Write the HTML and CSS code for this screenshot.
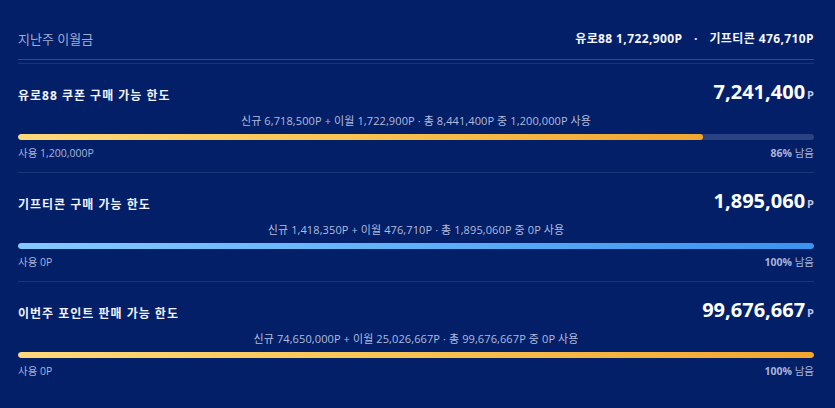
FILE: index.html
```html
<!DOCTYPE html>
<html lang="ko">
<head>
<meta charset="utf-8">
<link rel="stylesheet" href="styles.css">
</head>
<body>
<div class="panel">
  <div class="header">
    <span class="header-label">지난주 이월금</span>
    <span class="header-value">유로88 1,722,900P <span class="dot">·</span> 기프티콘 476,710P</span>
  </div>

  <div class="section">
    <div class="row">
      <span class="title">유로88 쿠폰 구매 가능 한도</span>
      <span class="amount">7,241,400<span class="unit">P</span></span>
    </div>
    <div class="detail">신규 6,718,500P + 이월 1,722,900P · 총 8,441,400P 중 1,200,000P 사용</div>
    <div class="track"><div class="fill fill-gold" style="width:86%"></div></div>
    <div class="labels">
      <span>사용 1,200,000P</span>
      <span><b>86%</b> 남음</span>
    </div>
  </div>

  <div class="section">
    <div class="row">
      <span class="title">기프티콘 구매 가능 한도</span>
      <span class="amount">1,895,060<span class="unit">P</span></span>
    </div>
    <div class="detail">신규 1,418,350P + 이월 476,710P · 총 1,895,060P 중 0P 사용</div>
    <div class="track"><div class="fill fill-blue" style="width:100%"></div></div>
    <div class="labels">
      <span>사용 0P</span>
      <span><b>100%</b> 남음</span>
    </div>
  </div>

  <div class="section">
    <div class="row">
      <span class="title">이번주 포인트 판매 가능 한도</span>
      <span class="amount">99,676,667<span class="unit">P</span></span>
    </div>
    <div class="detail">신규 74,650,000P + 이월 25,026,667P · 총 99,676,667P 중 0P 사용</div>
    <div class="track"><div class="fill fill-gold" style="width:100%"></div></div>
    <div class="labels">
      <span>사용 0P</span>
      <span><b>100%</b> 남음</span>
    </div>
  </div>
</div>
</body>
</html>
```

FILE: styles.css
```css
html, body {
  margin: 0;
  padding: 0;
  background: #021f68;
  height: 100%;
}
body {
  font-family: "Open Sans", "Noto Sans CJK KR", sans-serif;
  color: #f2f4fb;
}
.panel {
  padding: 0 21px 0 18px;
}
.header {
  display: flex;
  justify-content: space-between;
  align-items: center;
  padding: 30px 0 11px;
  line-height: 18px;
  border-bottom: 1px solid rgba(255, 255, 255, 0.2);
  margin-bottom: 3px;
}
.header-label {
  font-size: 13px;
  color: #9eabd3;
}
.header-value {
  font-size: 12px;
  font-weight: 700;
  color: #f4f6fc;
  letter-spacing: 0.4px;
}
.dot {
  margin: 0 8px;
}
.section {
  border-top: 1px solid rgba(255, 255, 255, 0.1);
  padding: 14px 0 12px;
}
.row {
  display: flex;
  justify-content: space-between;
  align-items: baseline;
  line-height: 28px;
}
.title {
  font-size: 12px;
  font-weight: 700;
  color: #f0f3fb;
  letter-spacing: 1px;
  position: relative;
  top: 1px;
}
.amount {
  font-size: 20px;
  font-weight: 700;
  color: #ffffff;
}
.unit {
  font-size: 11px;
  font-weight: 700;
  color: #b9c4e6;
  margin-left: 2px;
}
.detail {
  margin-top: 4px;
  font-size: 11px;
  line-height: 16px;
  text-align: center;
  color: #b2bcde;
  letter-spacing: 0.1px;
}
.track {
  margin-top: 5px;
  height: 6px;
  border-radius: 3px;
  background: #2b4282;
  overflow: hidden;
}
.fill {
  height: 100%;
  border-radius: 3px;
}
.fill-gold {
  background: linear-gradient(90deg, #ffd97a 0%, #f7c250 50%, #f2a62f 100%);
}
.fill-blue {
  background: linear-gradient(90deg, #84caff 0%, #5fb0f9 50%, #3a93ee 100%);
}
.labels {
  display: flex;
  justify-content: space-between;
  margin-top: 6px;
  font-size: 10.5px;
  line-height: 14px;
  color: #a8b4d8;
}
.labels b {
  font-weight: 700;
}
```
